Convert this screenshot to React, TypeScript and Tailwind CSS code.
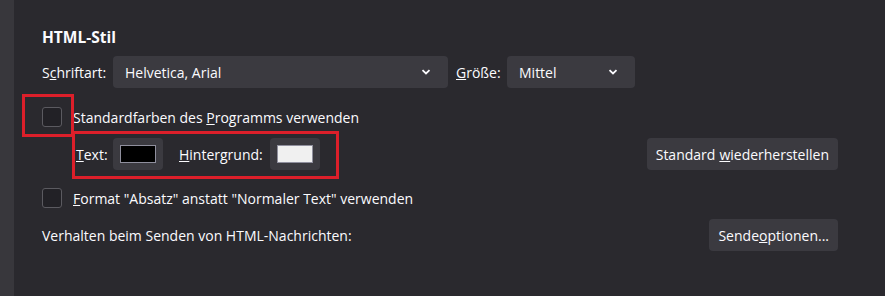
import React from 'react';

const font = { fontFamily: '"Open Sans", "Noto Sans", sans-serif' };

function Chevron() {
  return (
    <svg width="10" height="6" viewBox="0 0 10 6" className="text-[#fbfbfe]">
      <path d="M1.5 1.2 L5 4.5 L8.5 1.2" fill="none" stroke="currentColor" strokeWidth="1.8" />
    </svg>
  );
}

function Select({ value, width }: { value: string; width: string }) {
  return (
    <div className={`${width} h-8 rounded bg-[#3b3a40] flex items-center justify-between pl-3 pr-[17px]`}>
      <span>{value}</span>
      <Chevron />
    </div>
  );
}

function Checkbox() {
  return <div className="w-5 h-5 rounded-[3px] border border-[#5b5a60] bg-[#222126] shrink-0" />;
}

function Swatch({ color }: { color: string }) {
  return (
    <div className="w-[50px] h-8 rounded bg-[#3b3a40] flex items-center justify-center">
      <div className={`w-9 h-[18px] border border-[#8f8f9d] ${color}`} />
    </div>
  );
}

export default function App() {
  return (
    <div className="relative flex w-[885px] h-[296px] bg-[#2a292e] text-[#fbfbfe] text-[14px]" style={font}>
      <div className="w-[14px] bg-[#38373c] shrink-0" />
      <div className="flex-1 pl-[28px] pr-[47px] pt-[28px]">
        <div className="h-5 flex items-center font-bold text-[15.5px]">HTML-Stil</div>

        <div className="mt-2 h-8 flex items-center">
          <span className="w-[71px]">
            S<u>c</u>hriftart:
          </span>
          <Select value="Helvetica, Arial" width="w-[335px]" />
          <span className="ml-2 w-[51px]">
            <u>G</u>röße:
          </span>
          <Select value="Mittel" width="w-[128px]" />
        </div>

        <div className="mt-[19px] h-5 flex items-center gap-[11px]">
          <Checkbox />
          <span>
            Standardfarben des <u>P</u>rogramms verwenden
          </span>
        </div>

        <div className="mt-[11px] h-8 flex items-center">
          <span className="ml-[34px] w-[37px]">
            <u>T</u>ext:
          </span>
          <Swatch color="bg-black" />
          <span className="ml-4 w-[91px]">
            <u>H</u>intergrund:
          </span>
          <Swatch color="bg-[#f0f0f0]" />
          <div className="ml-auto h-8 px-[9px] rounded bg-[#3b3a40] flex items-center">
            Standard <u className="ml-1">w</u>iederherstellen
          </div>
        </div>

        <div className="mt-[18px] h-5 flex items-center gap-[11px]">
          <Checkbox />
          <span>
            <u>F</u>ormat "Absatz" anstatt "Normaler Text" verwenden
          </span>
        </div>

        <div className="mt-[11px] h-8 flex items-center justify-between">
          <span>Verhalten beim Senden von HTML-Nachrichten:</span>
          <div className="h-8 px-[9px] rounded bg-[#3b3a40] flex items-center">
            Sende<u>o</u>ptionen...
          </div>
        </div>
      </div>

      <div className="absolute left-[22px] top-[94px] w-[52px] h-[43px] border-[3px] border-[#dc1f2a]" />
      <div className="absolute left-[72px] top-[131px] w-[267px] h-[48px] border-[3px] border-[#dc1f2a]" />
    </div>
  );
}
